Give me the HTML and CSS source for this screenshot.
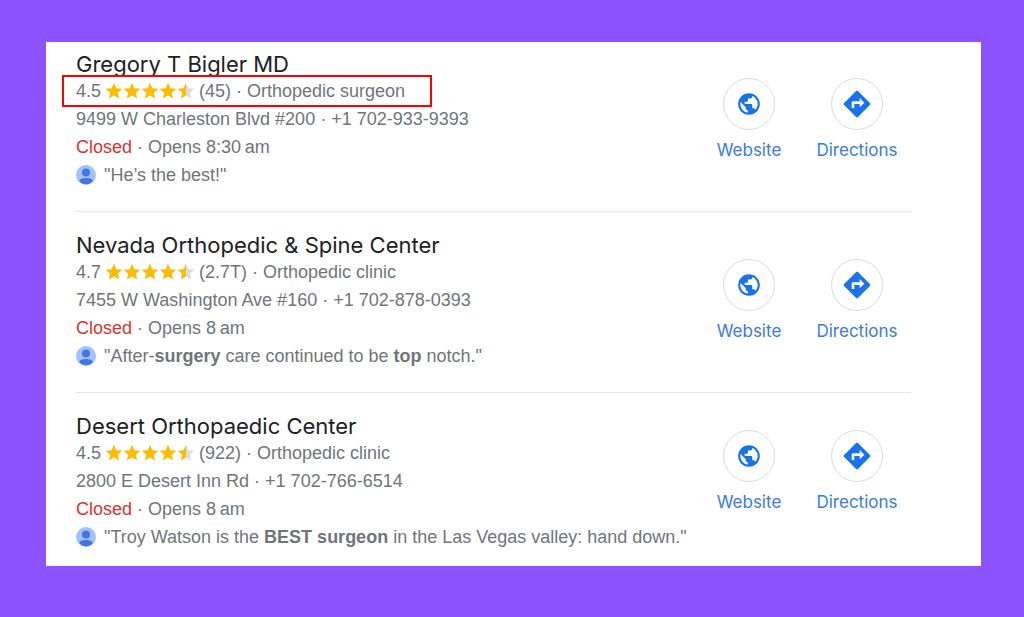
FILE: index.html
```html
<!DOCTYPE html>
<html lang="en">
<head>
  <meta charset="utf-8">
  <title>Orthopedic surgeons</title>
  <link rel="stylesheet" href="styles.css">
</head>
<body>
  <svg class="sprite" aria-hidden="true">
    <symbol id="star" viewBox="0 0 24 24">
      <path d="M12 17.27L18.18 21l-1.64-7.03L22 9.24l-7.19-.61L12 2 9.19 8.63 2 9.24l5.46 4.73L5.82 21z"/>
    </symbol>
    <symbol id="half-star" viewBox="0 0 24 24">
      <path fill="#dadce0" d="M12 17.27L18.18 21l-1.64-7.03L22 9.24l-7.19-.61L12 2z"/>
      <path fill="#fbbc04" d="M12 17.27V2L9.19 8.63 2 9.24l5.46 4.73L5.82 21z"/>
    </symbol>
    <symbol id="stars" viewBox="0 0 92 20">
      <use href="#star" x="0" width="20" height="20" fill="#fbbc04"/>
      <use href="#star" x="18" width="20" height="20" fill="#fbbc04"/>
      <use href="#star" x="36" width="20" height="20" fill="#fbbc04"/>
      <use href="#star" x="54" width="20" height="20" fill="#fbbc04"/>
      <use href="#half-star" x="72" width="20" height="20"/>
    </symbol>
    <symbol id="person" viewBox="0 0 20 20">
      <circle cx="10" cy="10" r="10" fill="#a0c3ff"/>
      <circle cx="10" cy="7.5" r="4" fill="#4374e0"/>
      <path fill="#4374e0" d="M10 13c-3.400 0-6.700 1.200-6.700 3.100C5 18.200 7.400 19.300 10 19.300s5-1.100 6.700-3.200C16.700 14.200 13.400 13 10 13z"/>
    </symbol>
    <symbol id="globe" viewBox="0 0 24 24">
      <path d="M12 2C6.48 2 2 6.48 2 12s4.480 10 10 10 10-4.480 10-10S17.520 2 12 2zm-1 17.930c-3.950-.49-7-3.850-7-7.930 0-.62.08-1.210.21-1.790L9 15v1c0 1.100.9 2 2 2v1.930zm6.900-2.540c-.26-.81-1-1.390-1.900-1.390h-1v-3c0-.55-.45-1-1-1H8v-2h2c.55 0 1-.45 1-1V7h2c1.100 0 2-.9 2-2v-.41c2.930 1.190 5 4.060 5 7.410 0 2.080-.8 3.970-2.100 5.390z"/>
    </symbol>
    <symbol id="directions" viewBox="0 0 24 24">
      <path d="M21.710 11.290l-9-9c-.39-.39-1.020-.39-1.410 0l-9 9c-.39.39-.39 1.020 0 1.410l9 9c.39.39 1.020.39 1.410 0l9-9c.39-.38.39-1.010 0-1.410zM14 14.500V12h-4v3H8v-4c0-.55.45-1 1-1h5V7.500l3.500 3.500-3.500 3.500z"/>
    </symbol>
  </svg>

  <main class="panel">
    <article class="place">
      <div class="info">
        <h2>Gregory T Bigler MD</h2>
        <div class="rating highlight">
          <span>4.5</span>
          <svg class="stars"><use href="#stars"/></svg>
          <span>(45) · Orthopedic surgeon</span>
        </div>
        <p>9499 W Charleston Blvd #200 · +1 702-933-9393</p>
        <p><span class="closed">Closed</span> · Opens 8:30&#8239;am</p>
        <div class="review">
          <svg class="avatar"><use href="#person"/></svg>
          <span>"He’s the best!"</span>
        </div>
      </div>
      <nav class="actions">
        <a href="#"><span class="circle"><svg class="globe"><use href="#globe"/></svg></span>Website</a>
        <a href="#"><span class="circle"><svg class="directions"><use href="#directions"/></svg></span>Directions</a>
      </nav>
    </article>

    <article class="place">
      <div class="info">
        <h2>Nevada Orthopedic &amp; Spine Center</h2>
        <div class="rating">
          <span>4.7</span>
          <svg class="stars"><use href="#stars"/></svg>
          <span>(2.7T) · Orthopedic clinic</span>
        </div>
        <p>7455 W Washington Ave #160 · +1 702-878-0393</p>
        <p><span class="closed">Closed</span> · Opens 8&#8239;am</p>
        <div class="review">
          <svg class="avatar"><use href="#person"/></svg>
          <span>"After-<b>surgery</b> care continued to be <b>top</b> notch."</span>
        </div>
      </div>
      <nav class="actions">
        <a href="#"><span class="circle"><svg class="globe"><use href="#globe"/></svg></span>Website</a>
        <a href="#"><span class="circle"><svg class="directions"><use href="#directions"/></svg></span>Directions</a>
      </nav>
    </article>

    <article class="place">
      <div class="info">
        <h2>Desert Orthopaedic Center</h2>
        <div class="rating">
          <span>4.5</span>
          <svg class="stars"><use href="#stars"/></svg>
          <span>(922) · Orthopedic clinic</span>
        </div>
        <p>2800 E Desert Inn Rd · +1 702-766-6514</p>
        <p><span class="closed">Closed</span> · Opens 8&#8239;am</p>
        <div class="review">
          <svg class="avatar"><use href="#person"/></svg>
          <span>"Troy Watson is the <b>BEST surgeon</b> in the Las Vegas valley: hand down."</span>
        </div>
      </div>
      <nav class="actions">
        <a href="#"><span class="circle"><svg class="globe"><use href="#globe"/></svg></span>Website</a>
        <a href="#"><span class="circle"><svg class="directions"><use href="#directions"/></svg></span>Directions</a>
      </nav>
    </article>
  </main>
</body>
</html>
```
FILE: styles.css
```css
* {
  box-sizing: border-box;
}

body {
  margin: 0;
  padding: 42px 43px 51px 46px;
  background-color: #8c52ff;
  color: #70757a;
  font-family: Arial, "Liberation Sans", sans-serif;
  font-size: 18px;
  line-height: 28px;
}

.sprite {
  display: none;
}

.panel {
  background-color: #fff;
  padding: 9px 70px 15px 30px;
}

.place {
  display: flex;
  justify-content: space-between;
  padding-bottom: 22px;
  margin-bottom: 20px;
  border-bottom: 1px solid #e3e5e8;
}

.place:last-child {
  padding-bottom: 0;
  margin-bottom: 0;
  border-bottom: none;
}

.info {
  flex: 1;
}

h2 {
  margin: 0;
  color: #202124;
  font-family: "Google Sans", Inter, sans-serif;
  font-size: 22px;
  font-weight: 400;
  line-height: 26px;
}

p {
  margin: 0;
}

.rating, .review {
  display: flex;
  align-items: center;
}

.rating {
  gap: 3px;
}

.highlight {
  position: relative;
  width: fit-content;
  margin: -2px 0 -2px -14px;
  padding: 0 25px 0 12px;
  border: 2px solid #f00;
  background-color: #fff;
}

.stars {
  width: 92px;
  height: 20px;
}

.closed {
  color: #dc322f;
}

.review {
  gap: 8px;
}

.avatar {
  width: 20px;
  height: 20px;
}

.actions {
  display: flex;
  padding-top: 27px;
}

.place:last-child .actions {
  padding-top: 17px;
}

.actions a {
  display: flex;
  flex-direction: column;
  align-items: center;
  gap: 6px;
  width: 108px;
  color: #3b78e7;
  font-family: "Google Sans", Inter, sans-serif;
  font-size: 17px;
  text-decoration: none;
}

.circle {
  display: flex;
  align-items: center;
  justify-content: center;
  width: 52px;
  height: 52px;
  border: 1px solid #dadce0;
  border-radius: 50%;
  fill: #1a73e8;
}

.globe {
  width: 26px;
  height: 26px;
}

.directions {
  width: 32px;
  height: 32px;
}
```
